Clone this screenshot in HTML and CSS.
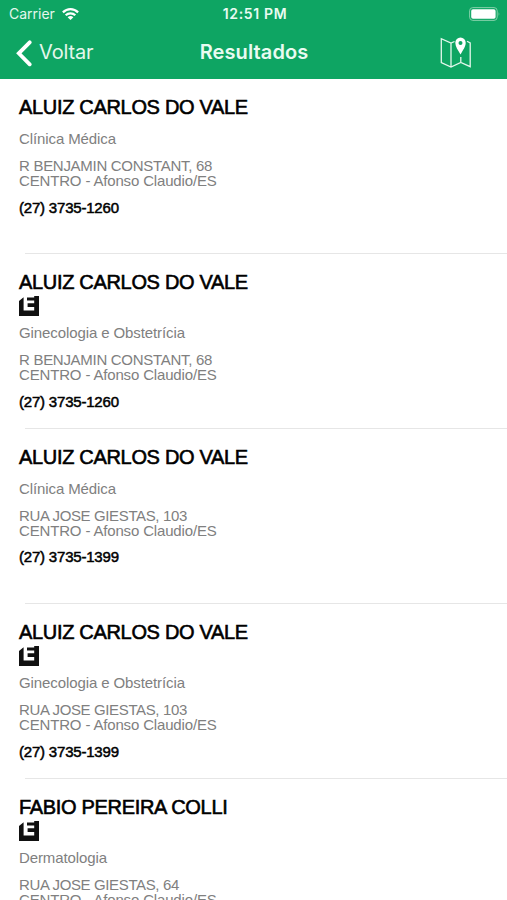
FILE: index.html
```html
<!DOCTYPE html>
<html lang="pt-BR">
<head>
<meta charset="utf-8">
<title>Resultados</title>
<link rel="stylesheet" href="styles.css">
</head>
<body>
<svg width="0" height="0" class="defs" aria-hidden="true">
  <symbol id="badge" viewBox="0 0 20 20">
    <path fill="#111" d="M0 5 4.600 1.200V14.500H15.200V0H20V20H0Z"/>
    <path fill="#111" d="M8 1.500H16V4.500H8ZM8.600 7.300H16V11H8.600Z"/>
  </symbol>
</svg>
<header class="top">
  <div class="status">
    <div class="carrier"><span>Carrier</span>
      <svg class="wifi" width="17" height="12" viewBox="0 0 17 12" fill="none" stroke="#fff" stroke-width="2.2"><path d="M.9 4.400C5.200.1 11.800.1 16.100 4.400M3.700 7.300C6.300 4.600 10.700 4.600 13.300 7.300"/><path fill="#fff" stroke="none" d="M5.600 9.200Q8.500 6.900 11.400 9.200L8.500 12Z"/></svg>
    </div>
    <span class="time">12:51 PM</span>
    <svg class="battery" width="32" height="14" viewBox="0 0 32 14"><rect x=".6" y=".6" width="27.600" height="12.800" rx="3.200" fill="none" stroke="#83cfa9" stroke-width="1"/><rect x="2.200" y="2.200" width="24.400" height="9.600" rx="1.800" fill="#fff"/><path d="M29.600 5Q31.200 7 29.600 9Z" fill="#83cfa9"/></svg>
  </div>
  <nav class="nav">
    <a class="back"><svg width="17" height="27" viewBox="0 0 17 27" fill="none" stroke="#fff" stroke-width="3.800"><path stroke-linecap="round" d="M14.700 2.300 3.800 13.300 14.700 24.300"/></svg><span>Voltar</span></a>
    <h1>Resultados</h1>
    <svg class="map" width="32" height="32" viewBox="0 0 32 32" fill="none" stroke="#e4f7ec" stroke-width="1.300"><path d="M14.500 4.500 11 6 1.300 1.700V25.500L11 30 20.800 25.500 30.200 29.700V6L27 4.300M11 6V30M20.800 20V25.500"/><path fill="#fff" fill-rule="evenodd" stroke="none" d="M20.500.5A5.200 5.200 0 0 0 15.300 5.700C15.300 9.500 18 13 20.500 17.500 23 13 25.700 9.500 25.700 5.700A5.200 5.200 0 0 0 20.500.5ZM20.500 3.900A2 2 0 1 1 20.500 7.900 2 2 0 0 1 20.500 3.900Z"/></svg>
  </nav>
</header>
<main>
  <article class="item">
    <h2>ALUIZ CARLOS DO VALE</h2>
    <p class="specialty clinica">Clínica Médica</p>
    <p class="address"><span>R BENJAMIN CONSTANT, 68</span><br>CENTRO - Afonso Claudio/ES</p>
    <p class="phone">(27) 3735-1260</p>
  </article>
  <article class="item">
    <h2>ALUIZ CARLOS DO VALE</h2>
    <svg class="badge"><use href="#badge"/></svg>
    <p class="specialty">Ginecologia e Obstetrícia</p>
    <p class="address"><span>R BENJAMIN CONSTANT, 68</span><br>CENTRO - Afonso Claudio/ES</p>
    <p class="phone">(27) 3735-1260</p>
  </article>
  <article class="item">
    <h2>ALUIZ CARLOS DO VALE</h2>
    <p class="specialty clinica">Clínica Médica</p>
    <p class="address"><span class="rua">RUA JOSE GIESTAS, 103</span><br>CENTRO - Afonso Claudio/ES</p>
    <p class="phone">(27) 3735-1399</p>
  </article>
  <article class="item">
    <h2>ALUIZ CARLOS DO VALE</h2>
    <svg class="badge"><use href="#badge"/></svg>
    <p class="specialty">Ginecologia e Obstetrícia</p>
    <p class="address"><span class="rua">RUA JOSE GIESTAS, 103</span><br>CENTRO - Afonso Claudio/ES</p>
    <p class="phone">(27) 3735-1399</p>
  </article>
  <article class="item">
    <h2>FABIO PEREIRA COLLI</h2>
    <svg class="badge"><use href="#badge"/></svg>
    <p class="specialty">Dermatologia</p>
    <p class="address"><span class="rua">RUA JOSE GIESTAS, 64</span><br>CENTRO - Afonso Claudio/ES</p>
  </article>
</main>
</body>
</html>
```
FILE: styles.css
```css
* { box-sizing: border-box; }
html, body { height: 100%; }
body {
  margin: 0;
  overflow: hidden;
  background: #fff;
  font-family: "Liberation Sans", Arial, sans-serif;
}
.defs { position: absolute; }
h1, h2, p { margin: 0; }
.top {
  height: 79px;
  background: #0ea563;
  color: #fff;
  font-family: Inter, "Liberation Sans", sans-serif;
}
.status {
  display: grid;
  grid-template-columns: 1fr auto 1fr;
  align-items: center;
  height: 27px;
  padding: 0 6px 0 9px;
}
.carrier { display: flex; align-items: center; gap: 7px; color: #e4f7ec; }
.carrier span { font-size: 14px; }
.time { font-size: 14px; font-weight: 600; letter-spacing: 0.65px; color: #e9fbf1; }
.battery { justify-self: end; }
.nav {
  display: grid;
  grid-template-columns: 1fr auto 1fr;
  align-items: center;
  height: 52px;
  padding: 0 15px;
}
.back { display: flex; align-items: center; gap: 7px; font-size: 20px; letter-spacing: -0.15px; line-height: 24px; color: #e4f7ec; }
.back span { margin-top: -2px; }
h1 { margin-top: -2px; padding-left: 1px; font-size: 20px; font-weight: 600; line-height: 24px; letter-spacing: 0.1px; color: #e9fbf1; }
.map { justify-self: end; margin-right: 20px; }
.item {
  height: 174.9px;
  padding: 17px 19px 0;
  background: linear-gradient(#e6e6e6, #e6e6e6) 25px 100% / 100% 1px no-repeat;
}
h2 {
  height: 22px;
  font-size: 20px;
  font-weight: 400;
  line-height: 22px;
  letter-spacing: -0.32px;
  white-space: nowrap;
  color: #000;
  -webkit-text-stroke: 0.6px #000;
}
.badge { display: block; width: 20px; height: 20px; margin: 3px 0 -2.5px; }
.specialty {
  margin-top: 9px;
  font-size: 15px;
  line-height: 22px;
  letter-spacing: -0.1px;
  color: #808080;
}
.clinica { margin-top: 10px; }
.address {
  margin-top: 8px;
  font-size: 15px;
  line-height: 15px;
  letter-spacing: -0.16px;
  color: #808080;
  white-space: nowrap;
}
.address span { letter-spacing: -0.29px; }
.address .rua { letter-spacing: -0.37px; }
.phone {
  margin-top: 8.6px;
  font-size: 15px;
  line-height: 22px;
  letter-spacing: -0.2px;
  color: #000;
  -webkit-text-stroke: 0.5px #000;
}
```
